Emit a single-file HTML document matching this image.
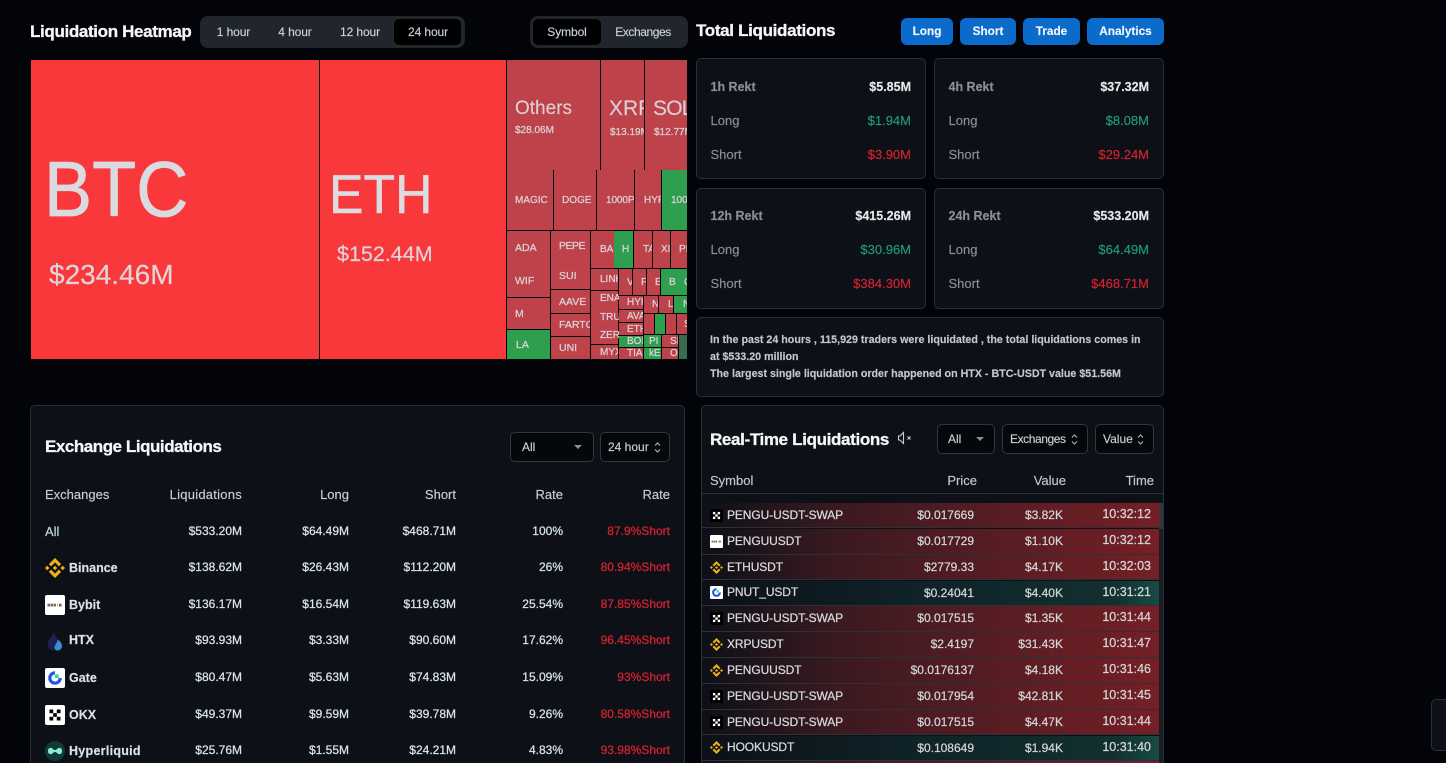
<!DOCTYPE html>
<html><head><meta charset="utf-8"><title>Liquidation Heatmap</title>
<style>
*{box-sizing:border-box;margin:0;padding:0}
html,body{width:1446px;height:763px;overflow:hidden;background:#02040a}
body{position:relative;font-family:"Liberation Sans",sans-serif;color:#dfe3e8;font-size:12px;-webkit-text-stroke:.15px}
.a{position:absolute}
.t{position:absolute;white-space:nowrap;line-height:16px}
.ttl{position:absolute;white-space:nowrap;font-weight:700;color:#f4f6f8;font-size:17px;line-height:22px;letter-spacing:-.36px;-webkit-text-stroke:.3px}
.seg{position:absolute;background:#21252c;border-radius:8px}
.on{position:absolute;background:#000;border-radius:5px}
.sg{position:absolute;white-space:nowrap;line-height:16px;color:#c9d2da;font-size:12px;letter-spacing:-.1px;transform:translateX(-50%)}
.btn{position:absolute;top:18px;height:27px;background:#0b6bcb;border-radius:6px;color:#f0f5fa;font-weight:700;font-size:11.8px;line-height:26px;text-align:center}
.card{position:absolute;background:#0d1017;border:1px solid #2b2f36;border-radius:5px}
.l{position:absolute;left:13.500px;white-space:nowrap;font-size:13px;line-height:16px;color:#8a9098}
.v{position:absolute;right:14px;white-space:nowrap;font-size:13px;line-height:16px}
.b{color:#e6e8ea;font-weight:700;font-size:12.5px}.lb{font-weight:700}
.g{color:#1e9d7b}.r{color:#d6232f}
.sel{position:absolute;background:#05070b;border:1px solid #32363e;border-radius:5px;height:30px;color:#c9d0d7;font-size:12px;line-height:28px;white-space:nowrap}
.tile{position:absolute;background:#bd4249;color:#dcd3d8;overflow:hidden;white-space:nowrap;display:flex;align-items:center;padding-left:9px;font-size:10px;-webkit-text-stroke:.25px}
.gr{background:#2e9e4f}
.x{position:absolute;white-space:nowrap;line-height:16px;font-size:12px;color:#d7e4ee;text-align:right;-webkit-text-stroke:.25px}
.row{position:absolute;left:702px;width:457px;height:25px;background:linear-gradient(90deg,#0d1017 0,#3b1a20 30%,#4c1c22 52%,#751f25 100%);border-bottom:1px solid #2d3038}
.row.u{background:linear-gradient(90deg,#0d1017 0,#0f2429 50%,#12302f 90%,#174a44 100%)}
.row span{position:absolute;white-space:nowrap;line-height:16px;top:4px;font-size:12px;color:#d2d4d6;-webkit-text-stroke:.25px}
.row .s{left:25px;font-size:12px;color:#d6d9dc;letter-spacing:-.1px}
.row .p{right:185px}.row .w{right:96px}
.row .m{right:8px;top:3px;font-size:12.5px}
.row svg{position:absolute;left:8px;top:6px;width:13px;height:13px}
.ic{position:absolute;left:45px;width:20px;height:20px}
.n{position:absolute;left:69px;white-space:nowrap;font-weight:700;font-size:12.5px;line-height:16px;color:#d9e3ec}
.c1{right:1204px}.c2{right:1097px}.c3{right:990px}.c4{right:883px}.c5{right:776px;color:#d6232f}
</style></head>
<body>
<svg width="0" height="0" style="position:absolute"><defs>
<symbol id="bn" viewBox="0 0 126.61 126.61"><g fill="#eeb019"><path d="M38.730 53.200 63.310 28.620 87.900 53.210 102.200 38.910 63.310 0 24.430 38.900Z"/><path d="M0 63.310 14.300 49 28.600 63.300 14.300 77.600Z"/><path d="M38.730 73.410 63.310 97.990 87.900 73.400 102.200 87.690 63.310 126.610 24.430 87.710Z"/><path d="M98 63.310 112.300 49 126.600 63.300 112.300 77.600Z"/><path d="M77.800 63.300 63.310 48.800 48.840 63.300 63.310 77.800Z"/></g></symbol>
<symbol id="ok" viewBox="0 0 20 20"><rect width="20" height="20" rx="2" fill="#fff"/><g fill="#000"><rect x="4.500" y="4.500" width="3.700" height="3.700"/><rect x="11.800" y="4.500" width="3.700" height="3.700"/><rect x="8.150" y="8.150" width="3.700" height="3.700"/><rect x="4.500" y="11.800" width="3.700" height="3.700"/><rect x="11.800" y="11.800" width="3.700" height="3.700"/></g></symbol>
<symbol id="okd" viewBox="0 0 20 20"><rect width="20" height="20" rx="3" fill="#000"/><g fill="#fff"><rect x="4.500" y="4.500" width="3.700" height="3.700"/><rect x="11.800" y="4.500" width="3.700" height="3.700"/><rect x="8.150" y="8.150" width="3.700" height="3.700"/><rect x="4.500" y="11.800" width="3.700" height="3.700"/><rect x="11.800" y="11.800" width="3.700" height="3.700"/></g></symbol>
<symbol id="by" viewBox="0 0 20 20"><rect width="20" height="20" rx="2" fill="#fff"/><g fill="#6a6a6a"><rect x="2.500" y="8.700" width="2.400" height="2.800"/><rect x="5.500" y="8.700" width="2.400" height="2.800"/><rect x="8.500" y="8.700" width="2.400" height="2.800"/></g><rect x="12" y="8.700" width="1" height="2.800" fill="#f7a600"/><rect x="14" y="8.700" width="2.600" height="2.800" fill="#6a6a6a"/></symbol>
<symbol id="gt" viewBox="0 0 20 20"><rect width="20" height="20" rx="2" fill="#fff"/><path d="M10 3.200A6.800 6.800 0 1 0 16.800 10H13.600A3.600 3.600 0 1 1 10 6.400Z" fill="#2354e6"/><rect x="10" y="6.400" width="3.600" height="3.600" fill="#17e6a1"/></symbol>
</defs></svg>

<div class="ttl" style="left:30px;top:21px;letter-spacing:-.35px">Liquidation Heatmap</div>
<div class="seg" style="left:200px;top:16px;width:265px;height:32px"></div>
<div class="on" style="left:394px;top:19px;width:67px;height:26px"></div>
<span class="sg" style="left:233.500px;top:24px">1 hour</span>
<span class="sg" style="left:295px;top:24px">4 hour</span>
<span class="sg" style="left:360px;top:24px">12 hour</span>
<span class="sg" style="left:428px;top:24px">24 hour</span>
<div class="seg" style="left:530px;top:16px;width:158px;height:32px"></div>
<div class="on" style="left:533px;top:19px;width:68px;height:26px"></div>
<span class="sg" style="left:567px;top:24px">Symbol</span>
<span class="sg" style="left:643px;top:24px;letter-spacing:-.42px">Exchanges</span>

<!-- heatmap -->
<div class="a" style="left:31px;top:60px;width:288px;height:299px;background:#f9383b"></div>
<div class="a" style="left:320px;top:60px;width:186px;height:299px;background:#f9383b"></div>
<div class="t" style="left:43.500px;top:144px;font-size:78px;line-height:90px;color:#d9dbe0;transform:scaleX(.925);transform-origin:0 0;-webkit-text-stroke:.8px">BTC</div>
<div class="t" style="left:49px;top:259px;font-size:28px;line-height:32px;color:#e2d5da">$234.46M</div>
<div class="t" style="left:329px;top:162px;font-size:55px;line-height:64px;color:#dcdbe0;transform:scaleX(.94);transform-origin:0 0;-webkit-text-stroke:.5px">ETH</div>
<div class="t" style="left:337px;top:241px;font-size:21.500px;line-height:26px;color:#e2d5da">$152.44M</div>

<div class="tile" style="left:507px;top:60px;width:93px;height:110px"></div>
<div class="tile" style="left:601px;top:60px;width:43px;height:110px"></div>
<div class="tile" style="left:645px;top:60px;width:42px;height:110px"></div>
<div class="t" style="left:515px;top:97px;font-size:19px;line-height:24px;color:#dbcfd5">Others</div>
<div class="t" style="left:515px;top:123px;font-size:10px;color:#dbcfd5;-webkit-text-stroke:.3px">$28.06M</div>
<div class="a" style="left:601px;top:60px;width:43px;height:110px;overflow:hidden"><div class="t" style="left:8px;top:36px;font-size:21px;line-height:26px;color:#dbcfd5">XRP</div><div class="t" style="left:9px;top:65px;font-size:10px;color:#dbcfd5;-webkit-text-stroke:.3px">$13.19M</div></div>
<div class="a" style="left:645px;top:60px;width:42px;height:110px;overflow:hidden"><div class="t" style="left:8px;top:36px;font-size:21px;line-height:26px;letter-spacing:-.8px;color:#dbcfd5">SOL</div><div class="t" style="left:9px;top:65px;font-size:10px;color:#dbcfd5;-webkit-text-stroke:.3px">$12.77M</div></div>

<div class="tile" style="left:507px;top:170px;width:46px;height:60px;padding-left:8px">MAGIC</div>
<div class="tile" style="left:554px;top:170px;width:42px;height:60px;padding-left:8px">DOGE</div>
<div class="tile" style="left:597px;top:170px;width:37px;height:60px;padding-left:9px;letter-spacing:-.1px">1000P</div>
<div class="tile" style="left:635px;top:170px;width:26px;height:60px;padding-left:9px">HYP</div>
<div class="tile gr" style="left:662px;top:170px;width:25px;height:60px;padding-left:9px">1000</div>

<div class="tile" style="left:507px;top:231px;width:43px;height:66px"></div>
<div class="t" style="left:515px;top:240px;font-size:10.500px;color:#dcd3d8;-webkit-text-stroke:.25px">ADA</div>
<div class="t" style="left:515px;top:273px;font-size:10.500px;color:#dcd3d8;-webkit-text-stroke:.25px">WIF</div>
<div class="tile" style="left:507px;top:298px;width:43px;height:31px;padding-left:8px;font-size:10.500px">M</div>
<div class="tile gr" style="left:507px;top:330px;width:43px;height:29px;padding-left:9px;font-size:10.500px">LA</div>
<div class="tile" style="left:551px;top:231px;width:39px;height:58px"></div>
<div class="t" style="left:559px;top:238px;font-size:10.500px;letter-spacing:-.5px;color:#dcd3d8;-webkit-text-stroke:.25px">PEPE</div>
<div class="t" style="left:559px;top:268px;font-size:10.500px;color:#dcd3d8;-webkit-text-stroke:.25px">SUI</div>
<div class="tile" style="left:551px;top:290px;width:39px;height:23px;padding-left:8px;font-size:10.500px">AAVE</div>
<div class="tile" style="left:551px;top:314px;width:39px;height:22px;padding-left:8px;font-size:10.500px">FARTCO</div>
<div class="tile" style="left:551px;top:337px;width:39px;height:22px;padding-left:8px;font-size:10.500px">UNI</div>
<div class="tile" style="left:591px;top:231px;width:42px;height:37px;padding-left:9px">BAN</div>
<div class="tile gr" style="left:614px;top:231px;width:19px;height:37px;padding-left:8px">H</div>
<div class="tile" style="left:634px;top:231px;width:18px;height:37px;padding-left:9px">TA</div>
<div class="tile" style="left:653px;top:231px;width:17px;height:37px;padding-left:8px">XI</div>
<div class="tile" style="left:671px;top:231px;width:16px;height:37px;padding-left:8px">PI</div>
<div class="tile" style="left:591px;top:269px;width:27px;height:21px;padding-left:9px">LINK</div>
<div class="tile" style="left:591px;top:291px;width:27px;height:53px"></div>
<div class="t" style="left:600px;top:291px;font-size:10px;color:#dcd3d8;-webkit-text-stroke:.25px">ENA</div>
<div class="t" style="left:600px;top:310px;font-size:10px;color:#dcd3d8;-webkit-text-stroke:.25px">TRU</div>
<div class="t" style="left:600px;top:328px;font-size:10px;color:#dcd3d8;-webkit-text-stroke:.25px">ZER</div>
<div class="tile" style="left:591px;top:345px;width:27px;height:14px;padding-left:9px">MYX</div>
<div class="tile" style="left:619px;top:269px;width:13px;height:26px;padding-left:8px">V</div>
<div class="tile" style="left:633px;top:269px;width:13px;height:26px;padding-left:8px">F</div>
<div class="tile" style="left:647px;top:269px;width:13px;height:26px;padding-left:8px">E</div>
<div class="tile gr" style="left:661px;top:269px;width:26px;height:26px;padding-left:8px">B&nbsp;&nbsp;&nbsp;G</div>
<div class="tile" style="left:619px;top:296px;width:24px;height:13px;padding-left:8px">HYP</div>
<div class="tile" style="left:619px;top:310px;width:24px;height:12px;padding-left:8px">AVA</div>
<div class="tile" style="left:619px;top:323px;width:24px;height:12px;padding-left:8px">ETH</div>
<div class="tile gr" style="left:619px;top:336px;width:24px;height:11px;padding-left:8px">BOI</div>
<div class="tile" style="left:619px;top:348px;width:24px;height:11px;padding-left:8px">TIA</div>
<div class="tile" style="left:644px;top:296px;width:14px;height:17px;padding-left:8px">N</div>
<div class="tile" style="left:659px;top:296px;width:14px;height:17px;padding-left:9px">LT</div>
<div class="tile gr" style="left:674px;top:296px;width:13px;height:17px;padding-left:9px">N</div>
<div class="tile" style="left:644px;top:314px;width:10px;height:20px"></div>
<div class="tile gr" style="left:655px;top:314px;width:10px;height:20px"></div>
<div class="tile" style="left:666px;top:314px;width:10px;height:20px"></div>
<div class="tile" style="left:677px;top:314px;width:10px;height:20px;padding-left:7px">S</div>
<div class="tile gr" style="left:644px;top:335px;width:17px;height:12px;padding-left:5px">PI</div>
<div class="tile" style="left:662px;top:335px;width:16px;height:12px;padding-left:8px">SI</div>
<div class="tile gr" style="left:644px;top:348px;width:17px;height:11px;padding-left:5px">kE</div>
<div class="tile" style="left:662px;top:348px;width:16px;height:11px;padding-left:8px">O</div>
<div class="a" style="left:679px;top:335px;width:8px;height:24px;background:#3a6b4c"></div>

<!-- total -->
<div class="ttl" style="left:696px;top:20px;letter-spacing:-.33px">Total Liquidations</div>
<div class="btn" style="left:901px;width:52px">Long</div>
<div class="btn" style="left:960px;width:56px">Short</div>
<div class="btn" style="left:1023px;width:57px">Trade</div>
<div class="btn" style="left:1087px;width:77px">Analytics</div>

<div class="card" style="left:696px;top:58px;width:230px;height:121px">
<span class="l lb" style="top:20px;font-size:12.500px">1h Rekt</span><span class="v b" style="top:20px">$5.85M</span>
<span class="l" style="top:54px">Long</span><span class="v g" style="top:54px">$1.94M</span>
<span class="l" style="top:88px">Short</span><span class="v r" style="top:88px">$3.90M</span></div>
<div class="card" style="left:934px;top:58px;width:230px;height:121px">
<span class="l lb" style="top:20px;font-size:12.500px">4h Rekt</span><span class="v b" style="top:20px">$37.32M</span>
<span class="l" style="top:54px">Long</span><span class="v g" style="top:54px">$8.08M</span>
<span class="l" style="top:88px">Short</span><span class="v r" style="top:88px">$29.24M</span></div>
<div class="card" style="left:696px;top:188px;width:230px;height:121px">
<span class="l lb" style="top:19px;font-size:12.500px">12h Rekt</span><span class="v b" style="top:19px">$415.26M</span>
<span class="l" style="top:53px">Long</span><span class="v g" style="top:53px">$30.96M</span>
<span class="l" style="top:87px">Short</span><span class="v r" style="top:87px">$384.30M</span></div>
<div class="card" style="left:934px;top:188px;width:230px;height:121px">
<span class="l lb" style="top:19px;font-size:12.500px">24h Rekt</span><span class="v b" style="top:19px">$533.20M</span>
<span class="l" style="top:53px">Long</span><span class="v g" style="top:53px">$64.49M</span>
<span class="l" style="top:87px">Short</span><span class="v r" style="top:87px">$468.71M</span></div>

<div class="card" style="left:696px;top:317px;width:468px;height:80px">
<div class="t" style="left:13px;top:13.500px;font-size:10.700px;line-height:17px;font-weight:700;color:#c4c7cb">In the past 24 hours , 115,929 traders were liquidated , the total liquidations comes in<br>at $533.20 million<br>The largest single liquidation order happened on HTX - BTC-USDT value $51.56M</div></div>

<!-- exchange -->
<div class="card" style="left:30px;top:405px;width:655px;height:380px"></div>
<div class="ttl" style="left:45px;top:436px;letter-spacing:-.46px">Exchange Liquidations</div>
<div class="sel" style="left:510px;top:432px;width:84px;padding-left:11px">All<svg class="a" style="left:63px;top:12px" width="8" height="5"><path d="M0 0H8L4 4Z" fill="#8a9098"/></svg></div>
<div class="sel" style="left:600px;top:432px;width:70px;padding-left:7px">24 hour<svg class="a" style="left:53px;top:9px" width="7" height="11" fill="none" stroke="#b5bac0"><path d="M1 3.500 3.500 1 6 3.500M1 7.500 3.500 10 6 7.500"/></svg></div>
<div class="t" style="left:45px;top:487px;font-size:13px;color:#c5d0d9">Exchanges</div>
<div class="t" style="right:1204px;top:487px;font-size:13px;letter-spacing:.25px;color:#c5d0d9">Liquidations</div>
<div class="t" style="right:1097px;top:487px;font-size:13px;color:#c5d0d9">Long</div>
<div class="t" style="right:990px;top:487px;font-size:13px;color:#c5d0d9">Short</div>
<div class="t" style="right:883px;top:487px;font-size:13px;color:#c5d0d9">Rate</div>
<div class="t" style="right:776px;top:487px;font-size:13px;color:#c5d0d9">Rate</div>

<div class="t" style="left:45px;top:524px;font-size:13px;color:#c5d7e6">All</div>
<span class="x c1" style="top:523px">$533.20M</span><span class="x c2" style="top:523px">$64.49M</span><span class="x c3" style="top:523px">$468.71M</span><span class="x c4" style="top:523px">100%</span><span class="x c5" style="top:523px">87.9%Short</span>

<svg class="ic" style="top:558px"><use href="#bn"/></svg><span class="n" style="top:560px">Binance</span>
<span class="x c1" style="top:559px">$138.62M</span><span class="x c2" style="top:559px">$26.43M</span><span class="x c3" style="top:559px">$112.20M</span><span class="x c4" style="top:559px">26%</span><span class="x c5" style="top:559px">80.94%Short</span>

<svg class="ic" style="top:595px"><use href="#by"/></svg><span class="n" style="top:597px">Bybit</span>
<span class="x c1" style="top:596px">$136.17M</span><span class="x c2" style="top:596px">$16.54M</span><span class="x c3" style="top:596px">$119.63M</span><span class="x c4" style="top:596px">25.54%</span><span class="x c5" style="top:596px">87.85%Short</span>

<svg class="ic" style="top:631px" viewBox="0 0 20 20"><path d="M8.500 .5C9 4 13 6.500 13 11.500 13 13 12 14 11 15 9.500 16.500 9 18 9 19.500 5 19.500 2.500 16.500 2.500 13 2.500 8 8 6 8.500 .5Z" fill="#1b2050"/><path d="M12.500 8.500C15.500 10.500 17 12.500 17 15 17 17.800 14.800 19.500 12.500 19.500 10.500 19.500 9.500 18 9.500 16.500 9.500 13.500 12.500 12.500 12.500 8.500Z" fill="#3d8bd0"/></svg><span class="n" style="top:632px">HTX</span>
<span class="x c1" style="top:632px">$93.93M</span><span class="x c2" style="top:632px">$3.33M</span><span class="x c3" style="top:632px">$90.60M</span><span class="x c4" style="top:632px">17.62%</span><span class="x c5" style="top:632px">96.45%Short</span>

<svg class="ic" style="top:668px"><use href="#gt"/></svg><span class="n" style="top:670px">Gate</span>
<span class="x c1" style="top:669px">$80.47M</span><span class="x c2" style="top:669px">$5.63M</span><span class="x c3" style="top:669px">$74.83M</span><span class="x c4" style="top:669px">15.09%</span><span class="x c5" style="top:669px">93%Short</span>

<svg class="ic" style="top:705px"><use href="#ok"/></svg><span class="n" style="top:707px">OKX</span>
<span class="x c1" style="top:706px">$49.37M</span><span class="x c2" style="top:706px">$9.59M</span><span class="x c3" style="top:706px">$39.78M</span><span class="x c4" style="top:706px">9.26%</span><span class="x c5" style="top:706px">80.58%Short</span>

<svg class="ic" style="top:741px" viewBox="0 0 20 20"><circle cx="10" cy="10" r="10" fill="#0f3a38"/><path d="M3 10C3 6.500 6 6 8 8 9.500 9.500 10.500 9.500 12 8 14 6 17 6.500 17 10 17 13.500 14 14 12 12 10.500 10.500 9.500 10.500 8 12 6 14 3 13.500 3 10Z" fill="#8fe9d4"/></svg><span class="n" style="top:743px;letter-spacing:.28px">Hyperliquid</span>
<span class="x c1" style="top:742px">$25.76M</span><span class="x c2" style="top:742px">$1.55M</span><span class="x c3" style="top:742px">$24.21M</span><span class="x c4" style="top:742px">4.83%</span><span class="x c5" style="top:742px">93.98%Short</span>

<!-- realtime -->
<div class="card" style="left:701px;top:405px;width:463px;height:380px"></div>
<div class="ttl" style="left:710px;top:428.500px;letter-spacing:-.35px">Real-Time Liquidations</div>
<svg class="a" style="left:897px;top:431px" width="17" height="14" fill="none" stroke="#c9ced4" stroke-width="1.100"><path d="M6.500 1.500 3 5H1.500V9H3L6.500 12.500Z"/><path d="M10.500 5.500 13.500 8.500M13.500 5.500 10.500 8.500"/></svg>
<div class="sel" style="left:937px;top:424px;width:58px;padding-left:10px">All<svg class="a" style="left:38px;top:12px" width="8" height="5"><path d="M0 0H8L4 4Z" fill="#8a9098"/></svg></div>
<div class="sel" style="left:1002px;top:424px;width:86px;padding-left:7px;letter-spacing:-.42px">Exchanges<svg class="a" style="left:68px;top:9px" width="7" height="11" fill="none" stroke="#b5bac0"><path d="M1 3.500 3.500 1 6 3.500M1 7.500 3.500 10 6 7.500"/></svg></div>
<div class="sel" style="left:1095px;top:424px;width:59px;padding-left:7px">Value<svg class="a" style="left:41px;top:9px" width="7" height="11" fill="none" stroke="#b5bac0"><path d="M1 3.500 3.500 1 6 3.500M1 7.500 3.500 10 6 7.500"/></svg></div>
<div class="t" style="left:710px;top:473px;font-size:13px;color:#c4c8cc">Symbol</div>
<div class="t" style="right:469px;top:473px;font-size:13px;color:#c4c8cc">Price</div>
<div class="t" style="right:380px;top:473px;font-size:13px;color:#c4c8cc">Value</div>
<div class="t" style="right:292px;top:473px;font-size:13px;color:#c4c8cc">Time</div>
<div class="a" style="left:702px;top:493px;width:461px;height:1px;background:#2d3038"></div>

<div class="a" style="left:1159px;top:503px;width:4px;height:260px;background:#1a1d24"></div>
<div class="a" style="left:1159px;top:503px;width:4px;height:26px;background:#33363d"></div>

<div class="row" style="top:503px"><svg><use href="#okd"/></svg><span class="s">PENGU-USDT-SWAP</span><span class="p">$0.017669</span><span class="w">$3.82K</span><span class="m">10:32:12</span></div>
<div class="row" style="top:529px;height:26px"><svg><use href="#by"/></svg><span class="s">PENGUUSDT</span><span class="p">$0.017729</span><span class="w">$1.10K</span><span class="m">10:32:12</span></div>
<div class="row" style="top:555px"><svg><use href="#bn"/></svg><span class="s">ETHUSDT</span><span class="p">$2779.33</span><span class="w">$4.17K</span><span class="m">10:32:03</span></div>
<div class="row u" style="top:581px"><svg style="top:5px"><use href="#gt"/></svg><span class="s" style="top:3px">PNUT_USDT</span><span class="p">$0.24041</span><span class="w">$4.40K</span><span class="m">10:31:21</span></div>
<div class="row" style="top:606px;height:26px"><svg><use href="#okd"/></svg><span class="s">PENGU-USDT-SWAP</span><span class="p">$0.017515</span><span class="w">$1.35K</span><span class="m">10:31:44</span></div>
<div class="row" style="top:632px;height:26px"><svg><use href="#bn"/></svg><span class="s">XRPUSDT</span><span class="p">$2.4197</span><span class="w">$31.43K</span><span class="m">10:31:47</span></div>
<div class="row" style="top:658px;height:26px"><svg><use href="#bn"/></svg><span class="s">PENGUUSDT</span><span class="p">$0.0176137</span><span class="w">$4.18K</span><span class="m">10:31:46</span></div>
<div class="row" style="top:684px;height:26px"><svg><use href="#okd"/></svg><span class="s">PENGU-USDT-SWAP</span><span class="p">$0.017954</span><span class="w">$42.81K</span><span class="m">10:31:45</span></div>
<div class="row" style="top:710px;height:25px"><svg><use href="#okd"/></svg><span class="s">PENGU-USDT-SWAP</span><span class="p">$0.017515</span><span class="w">$4.47K</span><span class="m">10:31:44</span></div>
<div class="row u" style="top:736px"><svg style="top:5px"><use href="#bn"/></svg><span class="s" style="top:3px">HOOKUSDT</span><span class="p">$0.108649</span><span class="w">$1.94K</span><span class="m">10:31:40</span></div>
<div class="row" style="top:761px"></div>

<div class="a" style="left:1431px;top:699px;width:30px;height:52px;background:#0d1017;border:1px solid #2b2f36;border-radius:5px"></div>
</body></html>
